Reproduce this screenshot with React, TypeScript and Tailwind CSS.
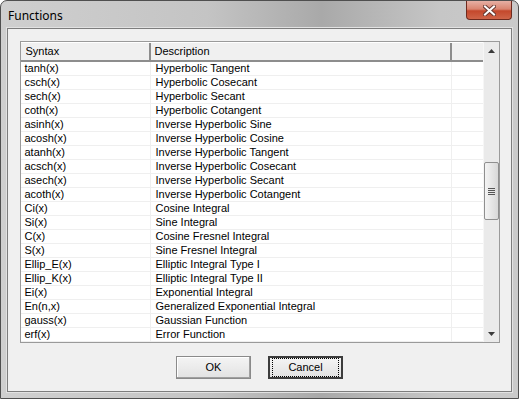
import React from 'react';

const rows: [string, string][] = [
  ['tanh(x)', 'Hyperbolic Tangent'],
  ['csch(x)', 'Hyperbolic Cosecant'],
  ['sech(x)', 'Hyperbolic Secant'],
  ['coth(x)', 'Hyperbolic Cotangent'],
  ['asinh(x)', 'Inverse Hyperbolic Sine'],
  ['acosh(x)', 'Inverse Hyperbolic Cosine'],
  ['atanh(x)', 'Inverse Hyperbolic Tangent'],
  ['acsch(x)', 'Inverse Hyperbolic Cosecant'],
  ['asech(x)', 'Inverse Hyperbolic Secant'],
  ['acoth(x)', 'Inverse Hyperbolic Cotangent'],
  ['Ci(x)', 'Cosine Integral'],
  ['Si(x)', 'Sine Integral'],
  ['C(x)', 'Cosine Fresnel Integral'],
  ['S(x)', 'Sine Fresnel Integral'],
  ['Ellip_E(x)', 'Elliptic Integral Type I'],
  ['Ellip_K(x)', 'Elliptic Integral Type II'],
  ['Ei(x)', 'Exponential Integral'],
  ['En(n,x)', 'Generalized Exponential Integral'],
  ['gauss(x)', 'Gaussian Function'],
  ['erf(x)', 'Error Function'],
];

const CloseButton = () => (
  <div className="w-[46px] h-[19px] rounded-b-[4px] border border-t-0 border-[#6e2a1e] bg-[linear-gradient(180deg,#e6b0a4_0%,#d98470_45%,#c4482c_55%,#cf6448_100%)] flex items-center justify-center">
    <svg width="13" height="11" viewBox="0 0 13 11">
      <path d="M2 1.5 L11 9.5 M11 1.5 L2 9.5" stroke="#6a3a32" strokeWidth="4" strokeLinecap="square" />
      <path d="M2 1.5 L11 9.5 M11 1.5 L2 9.5" stroke="#ffffff" strokeWidth="2" strokeLinecap="square" />
    </svg>
  </div>
);

const Scrollbar = () => (
  <div className="w-[16px] shrink-0 bg-[#eaeaea] border-l border-[#f6f6f6] flex flex-col items-center">
    <div className="h-[17px] w-full flex items-center justify-center">
      <svg width="7" height="4" viewBox="0 0 7 4"><path d="M3.5 0 L7 4 L0 4 Z" fill="#3a3a3a" /></svg>
    </div>
    <div className="h-[103px]" />
    <div className="w-[15px] h-[58px] rounded-[2px] border border-[#8f8f8f] bg-[linear-gradient(90deg,#f4f4f4,#e6e6e6_50%,#d8d8d8)] flex flex-col items-center justify-center gap-[1px]">
      <div className="w-[7px] h-[1px] bg-[#555]" />
      <div className="w-[7px] h-[1px] bg-[#555]" />
      <div className="w-[7px] h-[1px] bg-[#555]" />
      <div className="w-[7px] h-[1px] bg-[#555]" />
    </div>
    <div className="flex-1" />
    <div className="h-[17px] w-full flex items-center justify-center">
      <svg width="7" height="4" viewBox="0 0 7 4"><path d="M0 0 L7 0 L3.5 4 Z" fill="#3a3a3a" /></svg>
    </div>
  </div>
);

const Button = ({ label, focused }: { label: string; focused?: boolean }) => (
  <div
    className={`w-[75px] h-[23px] flex items-center justify-center bg-[linear-gradient(180deg,#f4f4f4,#e2e2e2)] ${
      focused ? 'border-2 border-[#3c3c3c]' : 'border border-[#8a8a8a] shadow-[inset_-1px_-1px_0_#a0a0a0,inset_1px_1px_0_#ffffff]'
    }`}
  >
    <div className={`w-full h-full flex items-center justify-center ${focused ? 'm-[2px] border border-dotted border-black' : ''}`}>
      <span className="text-[11px] text-black leading-none">{label}</span>
    </div>
  </div>
);

export default function App() {
  return (
    <div className="w-[519px] h-[399px] overflow-hidden bg-white" style={{ fontFamily: '"Liberation Sans", Arial, sans-serif' }}>
      <div className="w-full h-full rounded-t-[7px] border border-[#4f4f4f] bg-[linear-gradient(90deg,#cfcfcf_0%,#c4c4c4_40%,#a9a9a9_62%,#c6c6c6_85%,#cacaca_100%)] flex flex-col">
        {/* Title bar */}
        <div className="h-[27px] shrink-0 flex items-start pl-[7px] pr-[6px]">
          <span className="text-[12px] text-black mt-[6px]" style={{ fontFamily: '"Noto Sans", "Liberation Sans", sans-serif' }}>Functions</span>
          <div className="flex-1" />
          <CloseButton />
        </div>

        {/* Client area */}
        <div className="flex-1 mx-[6px] mb-[6px] border border-[#7d7d7d] bg-[#f0f0f0] flex flex-col items-center pt-[12px] px-[11px] shadow-[0_0_0_1px_#e2e2e2]">
          {/* List */}
          <div className="w-[480px] h-[302px] border border-[#9a9a9a] bg-white flex">
            <div className="flex-1 flex flex-col overflow-hidden">
              <div className="h-[20px] shrink-0 flex bg-[#f0f0f0] border-t border-white border-b-2 border-b-[#8d8d8d] text-[11px] text-black">
                <div className="w-[130px] pl-[5px] flex items-center border-r-2 border-[#8d8d8d]">Syntax</div>
                <div className="w-[301px] pl-[4px] flex items-center border-r-2 border-[#8d8d8d]">Description</div>
                <div className="flex-1" />
              </div>
              {rows.map(([s, d]) => (
                <div key={s} className="h-[14px] shrink-0 flex border-b border-[#efefef] text-[11px] text-black leading-[13px]">
                  <div className="w-[130px] pl-[4px] border-r border-[#efefef]">{s}</div>
                  <div className="w-[301px] pl-[5px] border-r border-[#efefef]">{d}</div>
                  <div className="flex-1" />
                </div>
              ))}
            </div>
            <Scrollbar />
          </div>

          {/* Buttons */}
          <div className="mt-[13px] flex gap-[17px]">
            <Button label="OK" />
            <Button label="Cancel" focused />
          </div>
        </div>
      </div>
    </div>
  );
}
